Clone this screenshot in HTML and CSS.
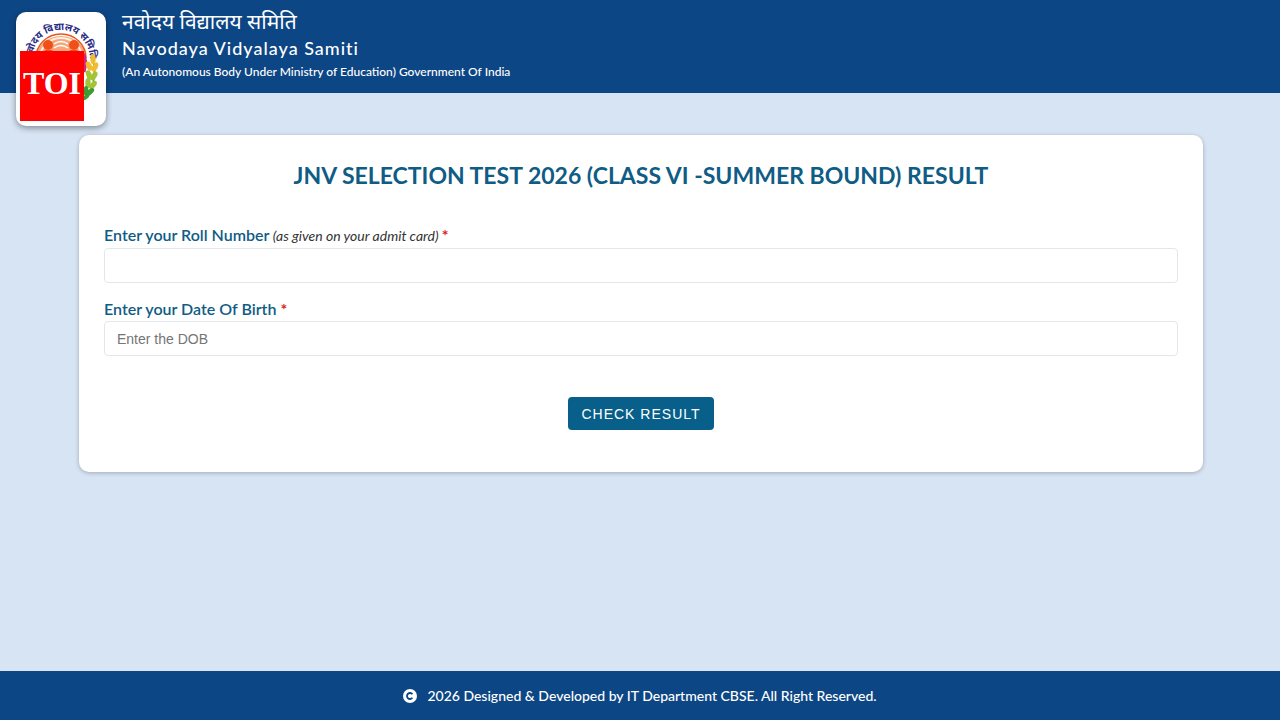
FILE: index.html
```html
<!DOCTYPE html>
<html lang="en">
<head>
    <meta charset="UTF-8">
    <meta name="viewport" content="width=device-width, initial-scale=1.0">
    <title>Navodaya Vidyalaya Samiti</title>
    <link rel="stylesheet" href="styles.css">
</head>
<body>
    <header class="header">
        <div class="logo">
            <svg class="emblem" viewBox="0 0 90 114" aria-hidden="true">
                <defs>
                    <path id="arc" d="M16 50 V48 A29 30 0 0 1 74 48 V50"/>
                </defs>
                <text class="emblem-text"><textPath href="#arc" startOffset="50%" text-anchor="middle">नवोदय विद्यालय समिति</textPath></text>
                <!-- sun rings -->
                <path d="M20 46 A25 22 0 0 1 70 46 Z" fill="#f4a77c"/>
                <path d="M20 46 A25 24 0 0 1 70 46" fill="none" stroke="#e8551c" stroke-width="1.5"/>
                <path d="M24 46 A21 20 0 0 1 66 46" fill="none" stroke="#fff3e8" stroke-width="2"/>
                <path d="M38 32 Q45 27 52 32 M38 36 Q45 31 52 36" fill="none" stroke="#fff" stroke-width="1.5"/>
                <circle cx="32" cy="33" r="5" fill="#ee5018"/>
                <circle cx="58" cy="33" r="5" fill="#ee5018"/>
                <path d="M26 46 L29 38 H35 L45 42 L55 38 H61 L67 46 V62 H26 Z" fill="#ee5018"/>
                <path d="M66 40 Q72 48 68 60" fill="none" stroke="#d5267a" stroke-width="3"/>
                <!-- wheat -->
                <path d="M68 86 Q82 75 77 47" fill="none" stroke="#49a62c" stroke-width="1.5"/>
                <g fill="#f0bd32">
                    <ellipse cx="77" cy="47" rx="2.7" ry="5"/>
                    <ellipse cx="73" cy="54" rx="2.7" ry="5" transform="rotate(-25 73 54)"/>
                    <ellipse cx="79" cy="55" rx="2.7" ry="5" transform="rotate(25 79 55)"/>
                </g>
                <g fill="#a3c437">
                    <ellipse cx="73" cy="63" rx="2.7" ry="5" transform="rotate(-20 73 63)"/>
                    <ellipse cx="78" cy="64" rx="2.7" ry="5" transform="rotate(30 78 64)"/>
                    <ellipse cx="72" cy="71" rx="2.7" ry="5"/>
                    <ellipse cx="77" cy="73" rx="2.7" ry="5" transform="rotate(40 77 73)"/>
                </g>
                <g fill="#3d9c31">
                    <ellipse cx="70" cy="79" rx="2.5" ry="5"/>
                    <ellipse cx="74" cy="80" rx="2.5" ry="5" transform="rotate(50 74 80)"/>
                    <ellipse cx="70" cy="85" rx="2" ry="4" transform="rotate(50 70 85)"/>
                </g>
            </svg>
            <span class="badge">TOI</span>
        </div>
        <div class="brand">
            <div class="brand-hindi" lang="hi">नवोदय विद्यालय समिति</div>
            <div class="brand-name">Navodaya Vidyalaya Samiti</div>
            <div class="brand-info">(An Autonomous Body Under Ministry of Education) Government Of India</div>
        </div>
    </header>

    <main class="main">
        <form class="card">
            <h1 class="title">JNV SELECTION TEST 2026 (CLASS VI -SUMMER BOUND) RESULT</h1>
            <div class="field">
                <label for="roll">Enter your Roll Number<em> (as given on your admit card) </em><span class="required">*</span></label>
                <input type="text" id="roll">
            </div>
            <div class="field">
                <label for="dob">Enter your Date Of Birth <span class="required">*</span></label>
                <input type="text" id="dob" placeholder="Enter the DOB">
            </div>
            <button type="submit" class="submit">CHECK RESULT</button>
        </form>
    </main>

    <footer class="footer">
        <svg class="copyright" viewBox="0 0 14 14" aria-hidden="true">
            <circle cx="7" cy="7" r="7" fill="#fff"/>
            <path d="M9.4 5.2 A3 3 0 1 0 9.4 8.8" fill="none" stroke="#0d4685" stroke-width="1.8"/>
        </svg>
        <span>2026 Designed &amp; Developed by IT Department CBSE. All Right Reserved.</span>
    </footer>
</body>
</html>
```

FILE: styles.css
```css
* {
    box-sizing: border-box;
}
body {
    display: flex;
    flex-direction: column;
    min-height: 100vh;
    margin: 0;
    font-family: Lato, "Noto Sans", sans-serif;
    background-color: #d7e4f3;
}
.header {
    position: relative;
    padding: 7px 16px 11px 122px;
    background-color: #0d4685;
    color: #fff;
}
.logo {
    position: absolute;
    top: 12px;
    left: 16px;
    width: 90px;
    height: 114px;
    background-color: #fff;
    border-radius: 10px;
    box-shadow: 0 2px 6px rgba(0, 0, 0, 0.4);
}
.emblem {
    display: block;
    width: 100%;
    height: 100%;
}
.emblem-text {
    font-family: "Noto Sans", sans-serif;
    font-size: 10px;
    font-weight: 700;
    fill: #2b2c86;
}
.badge {
    position: absolute;
    top: 39px;
    left: 4px;
    width: 64px;
    height: 70px;
    background-color: #f00;
    font: 700 32px/64px "Liberation Serif", serif;
    text-align: center;
}
.brand-hindi {
    font-size: 21px;
    line-height: 28px;
}
.brand-name {
    font-size: 18px;
    font-weight: 500;
    line-height: 26px;
    letter-spacing: 1px;
}
.brand-info {
    font-size: 12px;
    font-weight: 500;
    line-height: 21px;
}
.main {
    flex: 1;
    padding: 42px 77px 42px 79px;
}
.card {
    padding: 24px 25px 42px;
    background-color: #fff;
    border-radius: 10px;
    box-shadow: 0 1px 4px rgba(0, 0, 0, 0.25);
}
.title {
    margin: 0 0 34px;
    color: #0f5c85;
    font-size: 23px;
    font-weight: 700;
    line-height: 32px;
    text-align: center;
}
.field {
    margin-bottom: 16px;
}
.field label {
    display: block;
    margin-bottom: 2px;
    color: #0f5c85;
    font-size: 16px;
    font-weight: 600;
    line-height: 20px;
}
.field em {
    color: #333;
    font-size: 14px;
    font-weight: 400;
}
.required {
    color: #e02020;
    font-weight: 700;
}
.field input {
    display: block;
    width: 100%;
    height: 35px;
    padding: 0 12px;
    border: 1px solid #e3e7ea;
    border-radius: 4px;
    background-color: #fff;
    font-family: "Liberation Sans", Arial, sans-serif;
    font-size: 14px;
}
.field input::placeholder {
    color: #757575;
}
.submit {
    display: block;
    height: 33px;
    margin: 41px auto 0;
    padding: 0 13px;
    border: none;
    border-radius: 4px;
    background-color: #075f8a;
    color: #fff;
    font-family: "Liberation Sans", Arial, sans-serif;
    font-size: 14px;
    letter-spacing: 1px;
    cursor: pointer;
}
.footer {
    display: flex;
    align-items: center;
    justify-content: center;
    gap: 10px;
    padding: 14px;
    background-color: #0d4685;
    color: #fff;
    font-size: 14px;
    font-weight: 500;
    line-height: 21px;
}
.copyright {
    width: 14px;
    height: 14px;
}
```
